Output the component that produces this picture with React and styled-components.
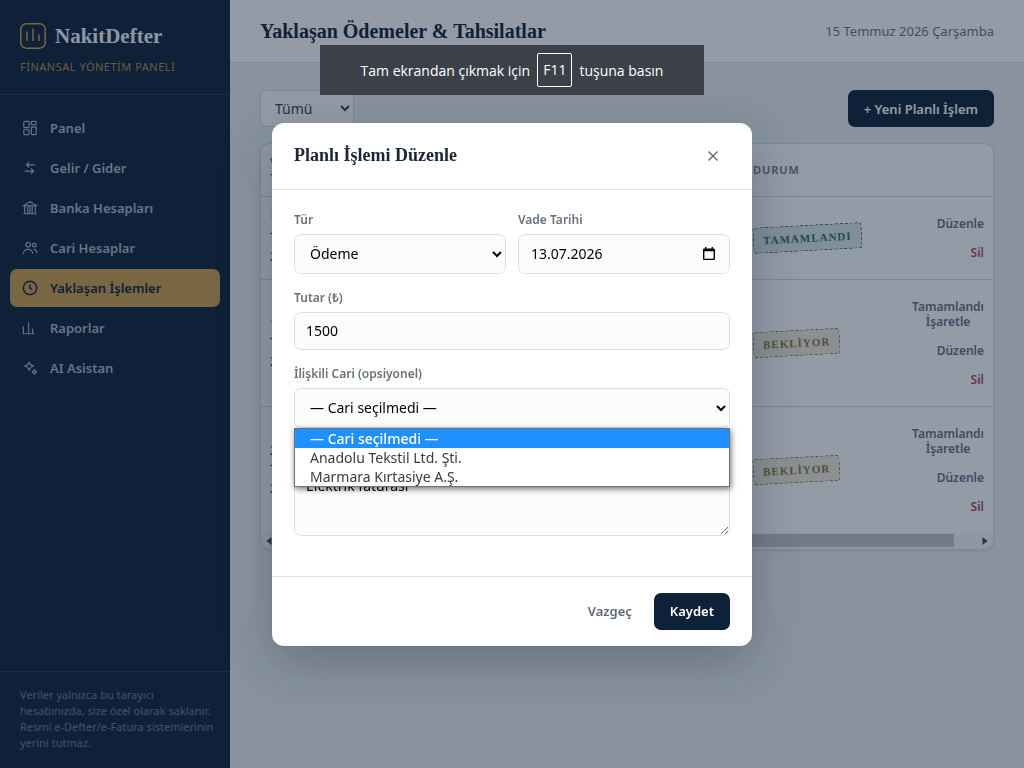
import React, { Component } from 'react'
import styled, { createGlobalStyle } from 'styled-components'

const sans = `'Noto Sans', 'Open Sans', sans-serif`
const serif = `'Liberation Serif', serif`
const navy = '#0f2139'
const gold = '#cf9f4a'

class App extends Component {
  state = {
    page: 'upcoming',
    amount: '1500',
    date: '13.07.2026',
    note: 'Elektrik faturası',
    party: 0
  }

  render () {
    return (
      <SApp>
        <GlobalStyle />
        {this.renderSidebar()}
        <SMain>
          <STopbar>
            <STitle>Yaklaşan Ödemeler &amp; Tahsilatlar</STitle>
            <SToday>15 Temmuz 2026 Çarşamba</SToday>
          </STopbar>
          <SContent>
            <SToolbar>
              <SFilter aria-label='Filtre' defaultValue='all'>
                <option value='all'>Tümü</option>
                <option value='wait'>Bekliyor</option>
                <option value='done'>Tamamlandı</option>
              </SFilter>
              <SPrimary>+ Yeni Planlı İşlem</SPrimary>
            </SToolbar>
            {this.renderTable()}
          </SContent>
        </SMain>
        {this.renderModal()}
        <SToast role='status'>
          Tam ekrandan çıkmak için <SKey>F11</SKey> tuşuna basın
        </SToast>
      </SApp>
    )
  }

  renderSidebar = () =>
    <SSidebar>
      <SBrand>
        <SBrandRow>
          <Logo />
          <SBrandName>NakitDefter</SBrandName>
        </SBrandRow>
        <STagline>FİNANSAL YÖNETİM PANELİ</STagline>
      </SBrand>
      <SNav>
        {getPages().map(({ id, label, icon }) =>
          <SNavItem
            key={id}
            href={`#${id}`}
            $active={id === this.state.page}
            onClick={() => this.setState({ page: id })}>
            <SIcon viewBox='0 0 18 18'>{icon}</SIcon>
            {label}
          </SNavItem>)}
      </SNav>
      <SSideNote>
        Veriler yalnızca bu tarayıcı hesabınızda, size özel olarak saklanır. Resmî e-Defter/e-Fatura sistemlerinin yerini tutmaz.
      </SSideNote>
    </SSidebar>

  renderTable = () =>
    <SCard>
      <STable>
        <thead>
          <tr>
            <STh $width='60px'>VADE TARİHİ</STh>
            <STh>TÜR</STh>
            <STh>AÇIKLAMA</STh>
            <STh>TUTAR</STh>
            <STh $width='150px'>DURUM</STh>
            <STh $width='99px' />
          </tr>
        </thead>
        <tbody>
          {getRows().map(row =>
            <tr key={row.id}>
              <STd>{row.day}<br />Tem<br />2026</STd>
              <STd>{row.type}</STd>
              <STd>{row.text}</STd>
              <STd>{row.amount}</STd>
              <STd><SStamp $done={row.done}>{row.done ? 'TAMAMLANDI' : 'BEKLİYOR'}</SStamp></STd>
              <STd>
                <SActions>
                  {!row.done && <SAction>Tamamlandı İşaretle</SAction>}
                  <SAction>Düzenle</SAction>
                  <SAction $danger>Sil</SAction>
                </SActions>
              </STd>
            </tr>)}
        </tbody>
      </STable>
      <SScroll aria-hidden='true'>
        <SArrow viewBox='0 0 6 8'><path d='M5.5 0v8L.5 4z' /></SArrow>
        <SThumb />
        <SArrow viewBox='0 0 6 8'><path d='M.5 0v8l5-4z' /></SArrow>
      </SScroll>
    </SCard>

  renderModal = () => {
    const { amount, date, note, party } = this.state
    return (
      <SBackdrop>
        <SModal role='dialog' aria-labelledby='modal-title'>
          <SModalHead>
            <SModalTitle id='modal-title'>Planlı İşlemi Düzenle</SModalTitle>
            <SClose aria-label='Kapat'>
              <svg width='12' height='12' viewBox='0 0 12 12' fill='none' stroke='currentColor' strokeWidth='1.4'>
                <path d='M1.5 1.5l9 9M10.5 1.5l-9 9' />
              </svg>
            </SClose>
          </SModalHead>
          <SModalBody>
            <SFieldRow>
              <SField>
                <SLabel htmlFor='type'>Tür</SLabel>
                <SSelect id='type' defaultValue='out'>
                  <option value='out'>Ödeme</option>
                  <option value='in'>Tahsilat</option>
                </SSelect>
              </SField>
              <SField>
                <SLabel htmlFor='date'>Vade Tarihi</SLabel>
                <SDateBox>
                  <SDateInput id='date' value={date} onChange={e => this.setState({ date: e.target.value })} />
                  <SDateButton aria-label='Takvim'>
                    <svg width='14' height='14' viewBox='0 0 14 14'>
                      <path d='M3 0h1.4v1.4h5.2V0H11v1.4h.6c.8 0 1.4.6 1.4 1.4v9c0 .7-.6 1.3-1.4 1.3H2.4C1.6 13.1 1 12.5 1 11.8v-9c0-.8.6-1.4 1.4-1.4H3zM2.4 4.3v7.5h9.2V4.3z' fillRule='evenodd' />
                    </svg>
                  </SDateButton>
                </SDateBox>
              </SField>
            </SFieldRow>
            <SField>
              <SLabel htmlFor='amount'>Tutar (₺)</SLabel>
              <SInput id='amount' value={amount} onChange={e => this.setState({ amount: e.target.value })} />
            </SField>
            <SField>
              <SLabel htmlFor='party'>İlişkili Cari (opsiyonel)</SLabel>
              <SSelect id='party' value={party} onChange={e => this.setState({ party: Number(e.target.value) })}>
                {getParties().map((name, index) => <option key={name} value={index}>{name}</option>)}
              </SSelect>
              <SOptions role='listbox' aria-label='Cari listesi'>
                {getParties().map((name, index) =>
                  <SOption
                    key={name}
                    role='option'
                    aria-selected={index === party}
                    $active={index === party}
                    onClick={() => this.setState({ party: index })}>
                    {name}
                  </SOption>)}
              </SOptions>
            </SField>
            <SField>
              <SLabel htmlFor='note'>Açıklama</SLabel>
              <STextarea id='note' value={note} onChange={e => this.setState({ note: e.target.value })} />
            </SField>
          </SModalBody>
          <SModalFoot>
            <SGhost>Vazgeç</SGhost>
            <SPrimary>Kaydet</SPrimary>
          </SModalFoot>
        </SModal>
      </SBackdrop>
    )
  }
}

const Logo = () =>
  <svg width='26' height='26' viewBox='0 0 26 26' fill='none' stroke={gold} strokeWidth='1.5'>
    <rect x='.8' y='.8' width='24.4' height='24.4' rx='5.5' />
    <path d='M7 8.500v9.500M13 5.500V18M19 11.500V18' />
  </svg>

const GlobalStyle = createGlobalStyle`
  * {
    box-sizing: border-box;
  }

  body {
    margin: 0;
    font-family: ${sans};
    font-size: 14px;
    color: #1c2530;
    background: #ecf1f1;
  }

  button, input, select, textarea {
    font-family: inherit;
  }
`

const SApp = styled.div`
  display: grid;
  grid-template-columns: 230px 1fr;
  min-height: 100vh;
`

const SSidebar = styled.aside`
  display: flex;
  flex-direction: column;
  background: ${navy};
`

const SBrand = styled.div`
  padding: 22px 20px 20px;
  border-bottom: 1px solid rgba(255, 255, 255, .1);
`

const SBrandRow = styled.div`
  display: flex;
  align-items: center;
  gap: 9px;
  height: 28px;
`

const SBrandName = styled.span`
  font: bold 21px ${serif};
  color: #f4f6f9;
`

const STagline = styled.div`
  margin-top: 9px;
  font-size: 11px;
  line-height: 15px;
  letter-spacing: .5px;
  color: ${gold};
  opacity: .85;
`

const SNav = styled.nav`
  display: flex;
  flex: 1;
  flex-direction: column;
  gap: 2px;
  padding: 14px 10px;
`

const SNavItem = styled.a`
  display: flex;
  align-items: center;
  gap: 12px;
  height: 38px;
  padding: 0 12px;
  border-radius: 7px;
  font-size: 13px;
  font-weight: 600;
  text-decoration: none;
  color: ${props => props.$active ? navy : '#adb9ca'};
  background: ${props => props.$active ? gold : 'transparent'};
`

const SIcon = styled.svg`
  width: 16px;
  height: 16px;
  fill: none;
  stroke: currentColor;
  stroke-width: 1.3;
`

const SSideNote = styled.p`
  margin: 0;
  padding: 15px 12px 17px 20px;
  border-top: 1px solid rgba(255, 255, 255, .1);
  font-size: 11px;
  line-height: 16px;
  color: #6c7c93;
`

const SMain = styled.main`
  min-width: 0;
`

const STopbar = styled.header`
  display: flex;
  align-items: center;
  justify-content: space-between;
  height: 63px;
  padding: 0 30px;
  border-bottom: 1px solid #d9dee2;
  background: #fff;
`

const STitle = styled.h1`
  margin: 0;
  font: bold 20px ${serif};
  color: ${navy};
`

const SToday = styled.span`
  font-size: 13px;
  color: #6b7480;
`

const SContent = styled.div`
  padding: 27px 30px;
`

const SToolbar = styled.div`
  display: flex;
  align-items: center;
  justify-content: space-between;
  margin-bottom: 16px;
`

const SFilter = styled.select`
  width: 94px;
  height: 37px;
  padding: 0 0 0 10px;
  border: 1px solid #d5dade;
  border-radius: 7px;
  font-size: 14px;
  color: #3a434e;
  background: #fff;
`

const SPrimary = styled.button`
  height: 37px;
  padding: 0 16px;
  border: 0;
  border-radius: 7px;
  font-size: 13px;
  font-weight: 600;
  color: #fff;
  background: ${navy};
`

const SCard = styled.section`
  overflow: hidden;
  border: 1px solid #d9dee2;
  border-radius: 10px;
  background: #fff;
  box-shadow: 0 1px 3px rgba(15, 33, 57, .12);
`

const STable = styled.table`
  width: 100%;
  table-layout: fixed;
  border-collapse: collapse;
`

const STh = styled.th`
  width: ${props => props.$width || 'auto'};
  height: 52px;
  padding: 0 9px;
  border-bottom: 1px solid #d5dade;
  font-size: 11px;
  font-weight: 600;
  line-height: 16px;
  letter-spacing: 1px;
  text-align: left;
  color: #6b7480;
`

const STd = styled.td`
  padding: 12px 9px;
  border-bottom: 1px solid #d5dade;
  font-size: 13px;
  line-height: 19px;

  tr:last-child > & {
    border-bottom: 0;
  }
`

const SStamp = styled.span`
  display: inline-block;
  padding: 3px 9px;
  border: 1px dashed;
  border-radius: 3px;
  font: bold 11px/18px ${serif};
  letter-spacing: 1px;
  transform: rotate(-3deg);
  color: ${props => props.$done ? '#2f6b5a' : '#8f743a'};
  background: ${props => props.$done ? '#dfe9e7' : '#f2ebdd'};
`

const SActions = styled.div`
  display: flex;
  flex-direction: column;
  align-items: flex-end;
`

const SAction = styled.button`
  width: min-content;
  padding: 7px 0;
  border: 0;
  font-size: 12px;
  font-weight: 600;
  line-height: 15px;
  color: ${props => props.$danger ? '#ac4a58' : '#66707f'};
  background: none;
`

const SScroll = styled.div`
  display: flex;
  align-items: center;
  gap: 6px;
  height: 16px;
  padding: 0 5px;
  background: #f6f7f8;
`

const SArrow = styled.svg`
  width: 6px;
  height: 8px;
  fill: #3f454d;
`

const SThumb = styled.div`
  flex: 1;
  height: 13px;
  margin-right: 22px;
  background: #c3c6ca;
`

const SBackdrop = styled.div`
  position: fixed;
  inset: 0;
  z-index: 1;
  display: flex;
  align-items: center;
  justify-content: center;
  background: rgba(15, 33, 57, .45);
`

const SModal = styled.div`
  width: 100%;
  max-width: 480px;
  border-radius: 12px;
  background: #fff;
  box-shadow: 0 16px 50px rgba(15, 33, 57, .3);
`

const SModalHead = styled.div`
  display: flex;
  align-items: center;
  justify-content: space-between;
  height: 67px;
  padding: 0 22px;
  border-bottom: 1px solid #d9dee2;
`

const SModalTitle = styled.h2`
  margin: 0;
  font: bold 18px ${serif};
`

const SClose = styled.button`
  display: flex;
  padding: 11px;
  border: 0;
  color: #5f6873;
  background: none;
`

const SModalBody = styled.div`
  padding: 22px 22px 24px;
`

const SFieldRow = styled.div`
  display: grid;
  grid-template-columns: 1fr 1fr;
  gap: 12px;
`

const SField = styled.div`
  position: relative;
  display: flex;
  flex-direction: column;
  gap: 6px;
  margin-bottom: 16px;
`

const SLabel = styled.label`
  font-size: 12px;
  font-weight: 600;
  line-height: 16px;
  color: #68717b;
`

const SInput = styled.input`
  width: 100%;
  height: 38px;
  padding: 0 11px;
  border: 1px solid #dcdfe2;
  border-radius: 7px;
  font-size: 14px;
  color: #000;
  background: #fcfcfc;
`

const SSelect = styled(SInput).attrs({ as: 'select' })`
  height: 40px;
  padding-right: 0;
`

const SDateBox = styled.div`
  position: relative;
`

const SDateInput = styled(SInput)`
  display: block;
  height: 40px;
  padding-left: 12px;
`

const SDateButton = styled.button`
  position: absolute;
  top: 13px;
  right: 14px;
  display: flex;
  padding: 0;
  border: 0;
  background: none;
`

const STextarea = styled(SInput).attrs({ as: 'textarea' })`
  height: 70px;
  padding: 9px 11px;
  line-height: 19px;
  resize: vertical;
`

const SOptions = styled.ul`
  position: absolute;
  top: 100%;
  left: 0;
  right: 0;
  z-index: 1;
  margin: 0;
  padding: 0;
  border: 1px solid #6f7276;
  list-style: none;
  background: #fff;
  box-shadow: 1px 2px 6px rgba(0, 0, 0, .55);
`

const SOption = styled.li`
  padding: 0 15px;
  font-size: 14px;
  font-weight: ${props => props.$active ? 500 : 400};
  line-height: 19px;
  color: ${props => props.$active ? '#fff' : '#3a3a3a'};
  background: ${props => props.$active ? '#1e90ff' : 'transparent'};
`

const SModalFoot = styled.div`
  display: flex;
  align-items: center;
  justify-content: flex-end;
  gap: 6px;
  padding: 16px 22px;
  border-top: 1px solid #d9dee2;
`

const SGhost = styled(SPrimary)`
  color: #5f6873;
  background: none;
`

const SToast = styled.div`
  position: fixed;
  top: 45px;
  left: 50%;
  z-index: 2;
  display: flex;
  align-items: center;
  justify-content: center;
  gap: 7px;
  width: 384px;
  height: 50px;
  transform: translateX(-50%);
  font: 14px 'Open Sans', sans-serif;
  color: #fff;
  background: #3c4149;
`

const SKey = styled.kbd`
  padding: 0 5px;
  border: 1px solid #fff;
  border-radius: 2px;
  font: 14px/32px 'Open Sans', sans-serif;
`

const getPages = () => [
  {
    id: 'panel',
    label: 'Panel',
    icon: <path d='M3 1.500h4a1 1 0 0 1 1 1v5a1 1 0 0 1-1 1H3a1 1 0 0 1-1-1v-5a1 1 0 0 1 1-1zM11.500 1.500H15a1 1 0 0 1 1 1v2a1 1 0 0 1-1 1h-3.500a1 1 0 0 1-1-1v-2a1 1 0 0 1 1-1zM11.500 8H15a1 1 0 0 1 1 1v6.500a1 1 0 0 1-1 1h-3.500a1 1 0 0 1-1-1V9a1 1 0 0 1 1-1zM3 11h4a1 1 0 0 1 1 1v3.500a1 1 0 0 1-1 1H3a1 1 0 0 1-1-1V12a1 1 0 0 1 1-1z' />
  },
  {
    id: 'flow',
    label: 'Gelir / Gider',
    icon: <path d='M15 5.500H5.500M8 2.500l-3 3 3 3M3 12.500h9.500M10 9.500l3 3-3 3' />
  },
  {
    id: 'banks',
    label: 'Banka Hesapları',
    icon: <path d='M1.500 6.500L9 2l7.500 4.500zM3 6.500V15M6.500 7v8M9 7v8M11.500 7v8M15 6.500V15M1.500 15.500h15' />
  },
  {
    id: 'parties',
    label: 'Cari Hesaplar',
    icon: <path d='M7 2.500a2.700 2.700 0 1 1 0 5.400 2.700 2.700 0 0 1 0-5.400zM1.500 15.500c0-3 2.400-5 5.300-5s5.200 2 5.200 5M13.800 3.800a2 2 0 1 1 0 4 2 2 0 0 1 0-4zM13 10.500c2 0 3.700 1.500 3.700 4.500' />
  },
  {
    id: 'upcoming',
    label: 'Yaklaşan İşlemler',
    icon: <path strokeWidth='1.6' d='M9 1.500a7.500 7.500 0 1 1 0 15 7.500 7.500 0 0 1 0-15zM9 5v4.300l2.500 1.500' />
  },
  {
    id: 'reports',
    label: 'Raporlar',
    icon: <path d='M1.500 7v8.500h13M7.500 2.500v13M12 9.500v6' />
  },
  {
    id: 'ai',
    label: 'AI Asistan',
    icon: <path d='M8 2c.7 3 1.700 4 4.700 4.800C9.700 7.600 8.700 8.600 8 11.600 7.300 8.600 6.300 7.600 3.300 6.800 6.300 6 7.300 5 8 2zM14 10.500c.3 1.800 1 2.400 2.800 2.800-1.800.4-2.500 1-2.800 2.800-.3-1.800-1-2.400-2.800-2.800 1.800-.4 2.500-1 2.800-2.800z' />
  }
]

const getRows = () => [
  { id: 1, day: 13, type: 'Ödeme', text: 'Elektrik faturası', amount: '₺1.500', done: true },
  { id: 2, day: 17, type: 'Ödeme', text: 'Kira', amount: '₺1.500', done: false },
  { id: 3, day: 20, type: 'Tahsilat', text: 'Fatura', amount: '₺1.500', done: false }
]

const getParties = () => ['— Cari seçilmedi —', 'Anadolu Tekstil Ltd. Şti.', 'Marmara Kırtasiye A.Ş.']

export default App
